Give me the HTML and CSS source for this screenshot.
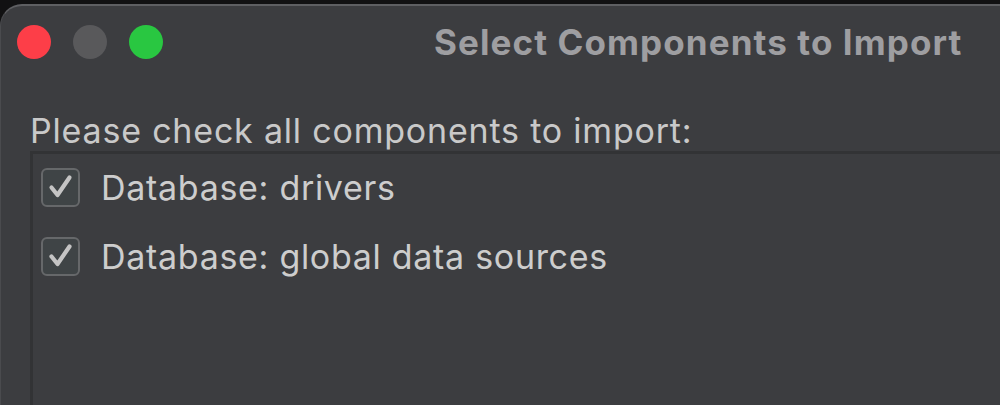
FILE: index.html
```html
<!DOCTYPE html>
<html>
<head>
<meta charset="utf-8">
<link rel="stylesheet" href="styles.css">
</head>
<body>
<div class="window">
  <div class="titlebar">
    <div class="lights">
      <span class="light red"></span>
      <span class="light grey"></span>
      <span class="light green"></span>
    </div>
    <div class="title">Select Components to Import</div>
  </div>
  <div class="content">
    <div class="prompt">Please check all components to import:</div>
    <div class="panel">
      <div class="item">
        <span class="box"><svg viewBox="0 0 38 38" width="38" height="38"><path d="M9.5 19.5 L15.5 27 L27.5 9.5" fill="none" stroke="#c4c4c4" stroke-width="4.2" stroke-linecap="round" stroke-linejoin="round"/></svg></span>
        <span class="label">Database: drivers</span>
      </div>
      <div class="item">
        <span class="box"><svg viewBox="0 0 38 38" width="38" height="38"><path d="M9.5 19.5 L15.5 27 L27.5 9.5" fill="none" stroke="#c4c4c4" stroke-width="4.2" stroke-linecap="round" stroke-linejoin="round"/></svg></span>
        <span class="label">Database: global data sources</span>
      </div>
    </div>
  </div>
</div>
</body>
</html>
```
FILE: styles.css
```css
html, body {
  margin: 0;
  padding: 0;
  background: #111112;
  width: 1000px;
  height: 405px;
  overflow: hidden;
}
.window {
  margin-top: 4px;
  height: 401px;
  background: #3c3d40;
  border-top: 2px solid #5e5f62;
  border-left: 1px solid #4a4b4e;
  border-top-left-radius: 22px;
  box-sizing: border-box;
  font-family: Inter, "Liberation Sans", Arial, sans-serif;
  overflow: hidden;
}
.titlebar {
  display: flex;
  align-items: center;
  height: 72px;
  padding-left: 16px;
}
.lights {
  display: flex;
  gap: 22px;
}
.light {
  width: 34px;
  height: 34px;
  border-radius: 50%;
  display: block;
}
.red { background: #fd3e48; }
.grey { background: #59595b; }
.green { background: #29c741; }
.title {
  margin-left: 271px;
  font-size: 35px;
  font-weight: 700;
  letter-spacing: 1.1px;
  color: #9e9ea1;
  white-space: nowrap;
}
.content {
  padding-left: 29px;
  padding-top: 33px;
}
.prompt {
  font-size: 34px;
  letter-spacing: 0.8px;
  color: #c9c9c9;
  line-height: 40px;
  white-space: nowrap;
}
.panel {
  margin-top: 0;
  border-top: 3px solid #323335;
  border-left: 3px solid #323335;
  height: 300px;
  padding-top: 13px;
  padding-left: 8px;
  display: flex;
  flex-direction: column;
  gap: 29px;
}
.item {
  display: flex;
  align-items: center;
  gap: 21px;
  height: 40px;
}
.box {
  width: 39px;
  height: 39px;
  box-sizing: border-box;
  border: 2px solid #66686a;
  border-radius: 6px;
  background: #3f4446;
  display: flex;
  align-items: center;
  justify-content: center;
  overflow: hidden;
}
.box svg { flex: none; }
.label {
  font-size: 34px;
  letter-spacing: 0.7px;
  color: #cdcdcd;
  white-space: nowrap;
}
```
